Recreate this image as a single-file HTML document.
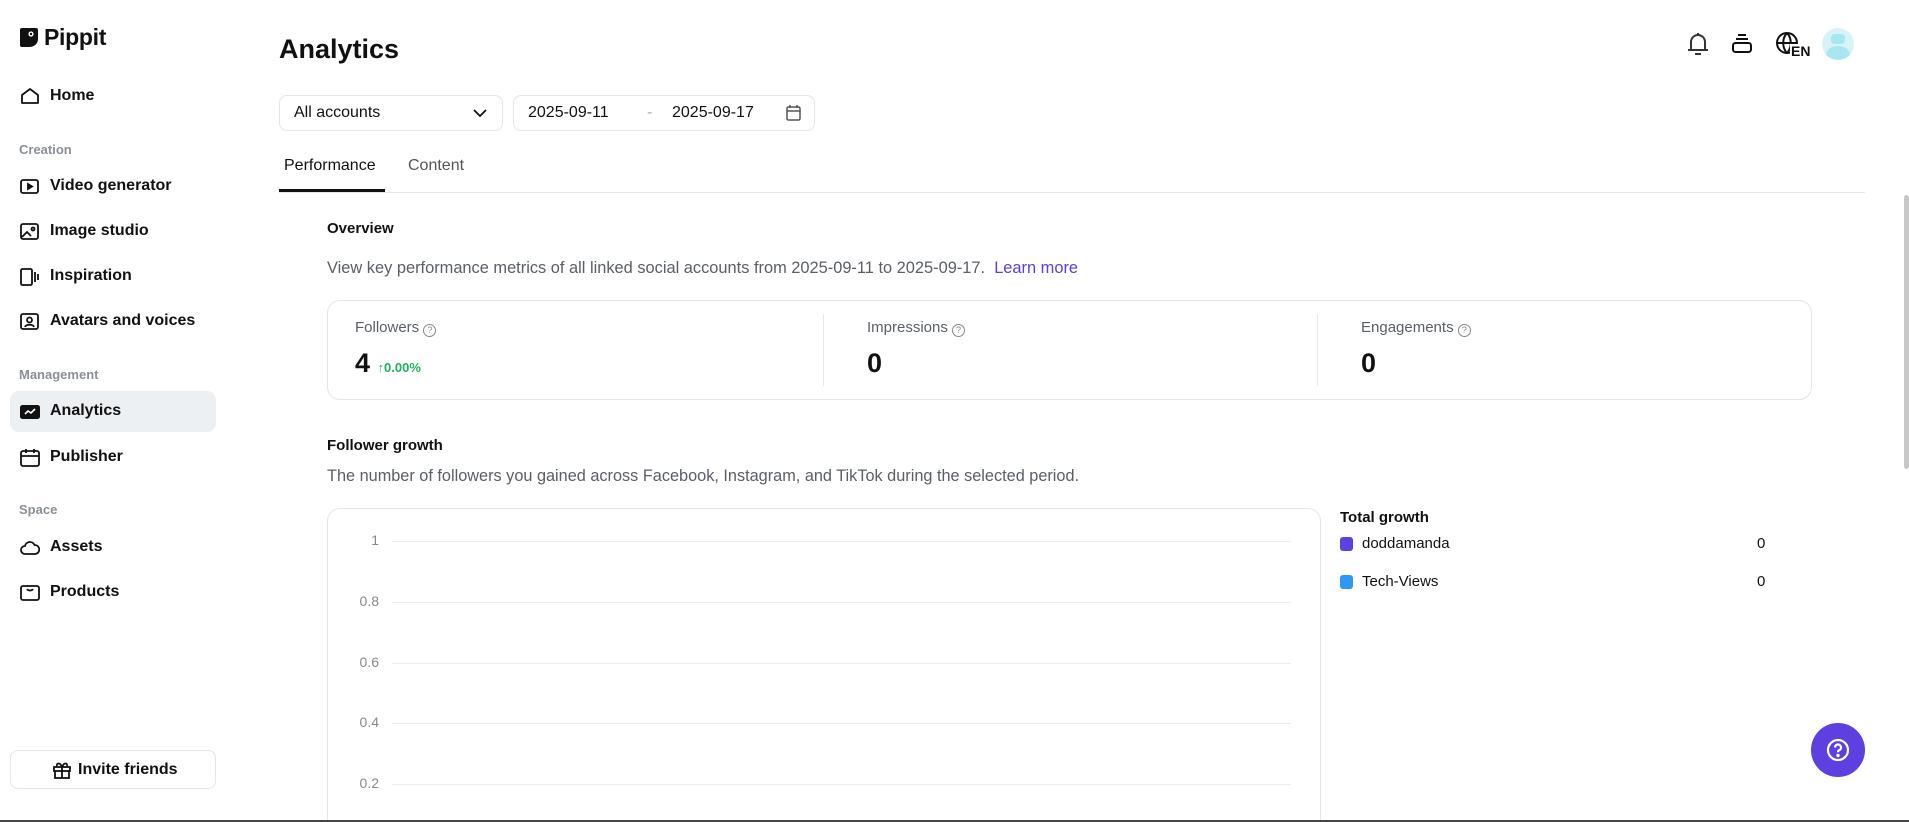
<!DOCTYPE html>
<html><head><meta charset="utf-8"><style>
*{margin:0;padding:0;box-sizing:border-box}
html,body{width:1909px;height:822px;overflow:hidden}
body{background:#fff;font-family:"Liberation Sans",Arial,sans-serif;color:#111}
#w{position:relative;width:1909px;height:822px;overflow:hidden}
.a{position:absolute;white-space:nowrap}
.nav{font-size:16px;font-weight:bold;color:#111}
.sec{font-size:13px;color:#8a8f98;font-weight:bold}
.ic{position:absolute;left:20px;width:20px;height:20px}
.g{font-size:15px;color:#5a5e66}
.grid{position:absolute;left:392px;width:899px;height:1px;background:#ececee}
.yl{position:absolute;width:50px;text-align:right;left:329px;font-size:14px;color:#888}
.q{display:inline-block;width:13px;height:13px;border:1.3px solid #888;border-radius:50%;font-size:9px;text-align:center;line-height:11px;color:#888;vertical-align:-1px}
</style></head><body><div id="w">
<svg class="a" style="left:19px;top:26px" width="20" height="22" viewBox="0 0 20 22"><path d="M3 2h14a2 2 0 0 1 2 2v9c0 5-4 8-9 8H3a2 2 0 0 1-2-2V4a2 2 0 0 1 2-2z" fill="#111"/><circle cx="12" cy="8" r="2.6" fill="#fff"/><circle cx="12" cy="8" r="1.2" fill="#111"/></svg>
<div class="a" style="left:44px;top:24px;font-size:23px;font-weight:bold;letter-spacing:-0.3px">Pippit</div>

<svg class="ic" style="top:86px" viewBox="0 0 20 20" fill="none" stroke="#111" stroke-width="1.8"><path d="M2 9l8-6 8 6v8H2z" stroke-linejoin="round"/></svg>
<div class="a nav" style="left:50px;top:87px">Home</div>
<div class="a sec" style="left:19px;top:142px">Creation</div>
<svg class="ic" style="top:177px" viewBox="0 0 20 20" fill="none" stroke="#111" stroke-width="1.8"><rect x="1" y="3" width="17" height="13" rx="2"/><path d="M8 7l4 2.5-4 2.5z" fill="#111"/></svg>
<div class="a nav" style="left:50px;top:177px">Video generator</div>
<svg class="ic" style="top:222px" viewBox="0 0 20 20" fill="none" stroke="#111" stroke-width="1.8"><rect x="1" y="2" width="17" height="15" rx="2"/><path d="M2 15l5-5 4 4"/><circle cx="13" cy="7" r="1.5"/></svg>
<div class="a nav" style="left:50px;top:222px">Image studio</div>
<svg class="ic" style="top:267px" viewBox="0 0 20 20" fill="none" stroke="#111" stroke-width="1.8"><rect x="1" y="2" width="11" height="16" rx="1.5"/><path d="M15 5v10M18 7v6"/></svg>
<div class="a nav" style="left:50px;top:267px">Inspiration</div>
<svg class="ic" style="top:312px" viewBox="0 0 20 20" fill="none" stroke="#111" stroke-width="1.8"><rect x="1" y="2" width="17" height="15" rx="2"/><circle cx="9.5" cy="8" r="2.5"/><path d="M5 15c1-3 8-3 9 0"/></svg>
<div class="a nav" style="left:50px;top:312px">Avatars and voices</div>
<div class="a sec" style="left:19px;top:367px">Management</div>
<div class="a" style="left:10px;top:391px;width:206px;height:41px;background:#edf0f3;border-radius:9px"></div>
<svg class="ic" style="top:402px" viewBox="0 0 20 20"><rect x="0" y="3" width="20" height="14" rx="2.5" fill="#111"/><path d="M5 12l3-3 3 2 4-4" stroke="#fff" stroke-width="1.6" fill="none"/></svg>
<div class="a nav" style="left:50px;top:402px">Analytics</div>
<svg class="ic" style="top:448px" viewBox="0 0 20 20" fill="none" stroke="#111" stroke-width="1.8"><rect x="1" y="3" width="18" height="15" rx="2"/><path d="M1 8h18M6 1v4M14 1v4"/></svg>
<div class="a nav" style="left:50px;top:448px">Publisher</div>
<div class="a sec" style="left:19px;top:502px">Space</div>
<svg class="ic" style="top:538px" viewBox="0 0 20 20" fill="none" stroke="#111" stroke-width="1.8"><path d="M5 16a4 4 0 0 1 0-8 5 5 0 0 1 9.5-1A4.5 4.5 0 0 1 15 16z"/></svg>
<div class="a nav" style="left:50px;top:538px">Assets</div>
<svg class="ic" style="top:583px" viewBox="0 0 20 20" fill="none" stroke="#111" stroke-width="1.8"><rect x="1" y="3" width="18" height="14" rx="2"/><path d="M7 6c1 2 5 2 6 0"/></svg>
<div class="a nav" style="left:50px;top:583px">Products</div>
<div class="a" style="left:10px;top:750px;width:206px;height:39px;border:1px solid #e3e5e8;border-radius:8px"></div>
<svg class="a" style="left:52px;top:760px" width="20" height="20" viewBox="0 0 20 20" fill="none" stroke="#111" stroke-width="1.8"><rect x="2" y="7" width="16" height="4"/><path d="M3 11v7h14v-7M10 7v11M10 7c-2-5-6-4-5-1M10 7c2-5 6-4 5-1"/></svg>
<div class="a nav" style="left:78px;top:761px">Invite friends</div>

<div class="a" style="left:279px;top:34px;font-size:27px;font-weight:bold">Analytics</div>
<svg class="a" style="left:1686px;top:31px" width="24" height="26" viewBox="0 0 24 26" fill="none" stroke="#333" stroke-width="2"><path d="M5 19V11a7 7 0 0 1 14 0v8M2 19h20M9 23h6M12 2v2"/></svg>
<svg class="a" style="left:1731px;top:33px" width="22" height="22" viewBox="0 0 22 22" fill="none" stroke="#111" stroke-width="2"><rect x="2" y="10" width="18" height="9" rx="2.5"/><path d="M5 6h12M7 2h8"/></svg>
<svg class="a" style="left:1775px;top:31px" width="32" height="28" viewBox="0 0 32 28" fill="none" stroke="#111" stroke-width="2"><circle cx="12" cy="12" r="10"/><path d="M2 12h20M12 2c-5 5-5 15 0 20M12 2c5 5 5 15 0 20"/></svg>
<div class="a" style="left:1790px;top:44px;font-size:14px;font-weight:bold;background:#fff;padding-left:1px;line-height:14px">EN</div>
<div class="a" style="left:1822px;top:28px;width:32px;height:32px;border-radius:50%;background:#d8f3f7;overflow:hidden"><div style="position:absolute;left:9px;top:6px;width:14px;height:10px;border-radius:4px;background:#a6e7f0"></div><div style="position:absolute;left:4px;top:18px;width:24px;height:18px;border-radius:50%;background:#a6e7f0"></div></div>

<div class="a" style="left:279px;top:95px;width:224px;height:36px;border:1px solid #e3e5e8;border-radius:8px"></div>
<div class="a" style="left:294px;top:104px;font-size:16px">All accounts</div>
<svg class="a" style="left:472px;top:106px" width="16" height="14" viewBox="0 0 16 14" fill="none" stroke="#111" stroke-width="1.8"><path d="M2 4l6 6 6-6"/></svg>
<div class="a" style="left:513px;top:95px;width:302px;height:36px;border:1px solid #e3e5e8;border-radius:8px"></div>
<div class="a" style="left:528px;top:104px;font-size:16px">2025-09-11</div>
<div class="a" style="left:647px;top:104px;font-size:16px;color:#aaa">-</div>
<div class="a" style="left:672px;top:104px;font-size:16px">2025-09-17</div>
<svg class="a" style="left:786px;top:105px" width="15" height="16" viewBox="0 0 15 16" fill="none" stroke="#555" stroke-width="1.5"><rect x="1" y="2" width="13" height="13" rx="1.5"/><path d="M1 6h13M4 0v3M11 0v3"/></svg>

<div class="a" style="left:284px;top:157px;font-size:16px;color:#111">Performance</div>
<div class="a" style="left:408px;top:157px;font-size:16px;color:#555">Content</div>
<div class="a" style="left:279px;top:192px;width:1586px;height:1px;background:#e3e5e8"></div>
<div class="a" style="left:279px;top:189px;width:106px;height:3px;background:#111"></div>

<div class="a" style="left:327px;top:220px;font-size:15px;font-weight:bold">Overview</div>
<div class="a g" style="left:327px;top:259px;font-size:16.4px">View key performance metrics of all linked social accounts from 2025-09-11 to 2025-09-17. <span style="color:#5b3ee0">&nbsp;Learn more</span></div>
<div class="a" style="left:327px;top:300px;width:1485px;height:100px;border:1px solid #e3e5e8;border-radius:13px"></div>
<div class="a" style="left:823px;top:314px;width:1px;height:72px;background:#e8e8ea"></div>
<div class="a" style="left:1317px;top:314px;width:1px;height:72px;background:#e8e8ea"></div>
<div class="a g" style="left:355px;top:319px">Followers <span class="q">?</span></div>
<div class="a" style="left:355px;top:348px;font-size:27px;font-weight:bold">4 <span style="font-size:13px;color:#1db35a">↑0.00%</span></div>
<div class="a g" style="left:867px;top:319px">Impressions <span class="q">?</span></div>
<div class="a" style="left:867px;top:348px;font-size:27px;font-weight:bold">0</div>
<div class="a g" style="left:1361px;top:319px">Engagements <span class="q">?</span></div>
<div class="a" style="left:1361px;top:348px;font-size:27px;font-weight:bold">0</div>

<div class="a" style="left:327px;top:437px;font-size:15px;font-weight:bold">Follower growth</div>
<div class="a g" style="left:327px;top:467px;font-size:16.3px">The number of followers you gained across Facebook, Instagram, and TikTok during the selected period.</div>
<div class="a" style="left:327px;top:508px;width:994px;height:340px;border:1px solid #e3e5e8;border-radius:13px"></div>
<div class="grid" style="top:541px"></div><div class="yl" style="top:532px">1</div>
<div class="grid" style="top:602px"></div><div class="yl" style="top:593px">0.8</div>
<div class="grid" style="top:663px"></div><div class="yl" style="top:654px">0.6</div>
<div class="grid" style="top:723px"></div><div class="yl" style="top:714px">0.4</div>
<div class="grid" style="top:784px"></div><div class="yl" style="top:775px">0.2</div>

<div class="a" style="left:1340px;top:509px;font-size:15px;font-weight:bold">Total growth</div>
<div class="a" style="left:1340px;top:537px;width:13px;height:14px;border-radius:3px;background:#5e3fe0"></div>
<div class="a" style="left:1362px;top:535px;font-size:15px">doddamanda</div>
<div class="a" style="left:1757px;top:535px;font-size:15px">0</div>
<div class="a" style="left:1340px;top:575px;width:13px;height:14px;border-radius:3px;background:#2e97f7"></div>
<div class="a" style="left:1362px;top:573px;font-size:15px">Tech-Views</div>
<div class="a" style="left:1757px;top:573px;font-size:15px">0</div>

<div class="a" style="left:1811px;top:723px;width:54px;height:54px;border-radius:50%;background:#5e3fe0"></div>
<svg class="a" style="left:1826px;top:738px" width="24" height="24" viewBox="0 0 24 24" fill="none" stroke="#fff" stroke-width="2.2"><circle cx="12" cy="12" r="10"/><path d="M9 9.5a3 3 0 1 1 4 2.8c-1 .4-1 1-1 2" /><circle cx="12" cy="17.5" r="0.6" fill="#fff"/></svg>

<div class="a" style="left:1904px;top:195px;width:5px;height:274px;background:#c8c8c8;border-radius:3px"></div>
<div class="a" style="left:0;top:820px;width:1909px;height:2px;background:#444"></div>
</div></body></html>
